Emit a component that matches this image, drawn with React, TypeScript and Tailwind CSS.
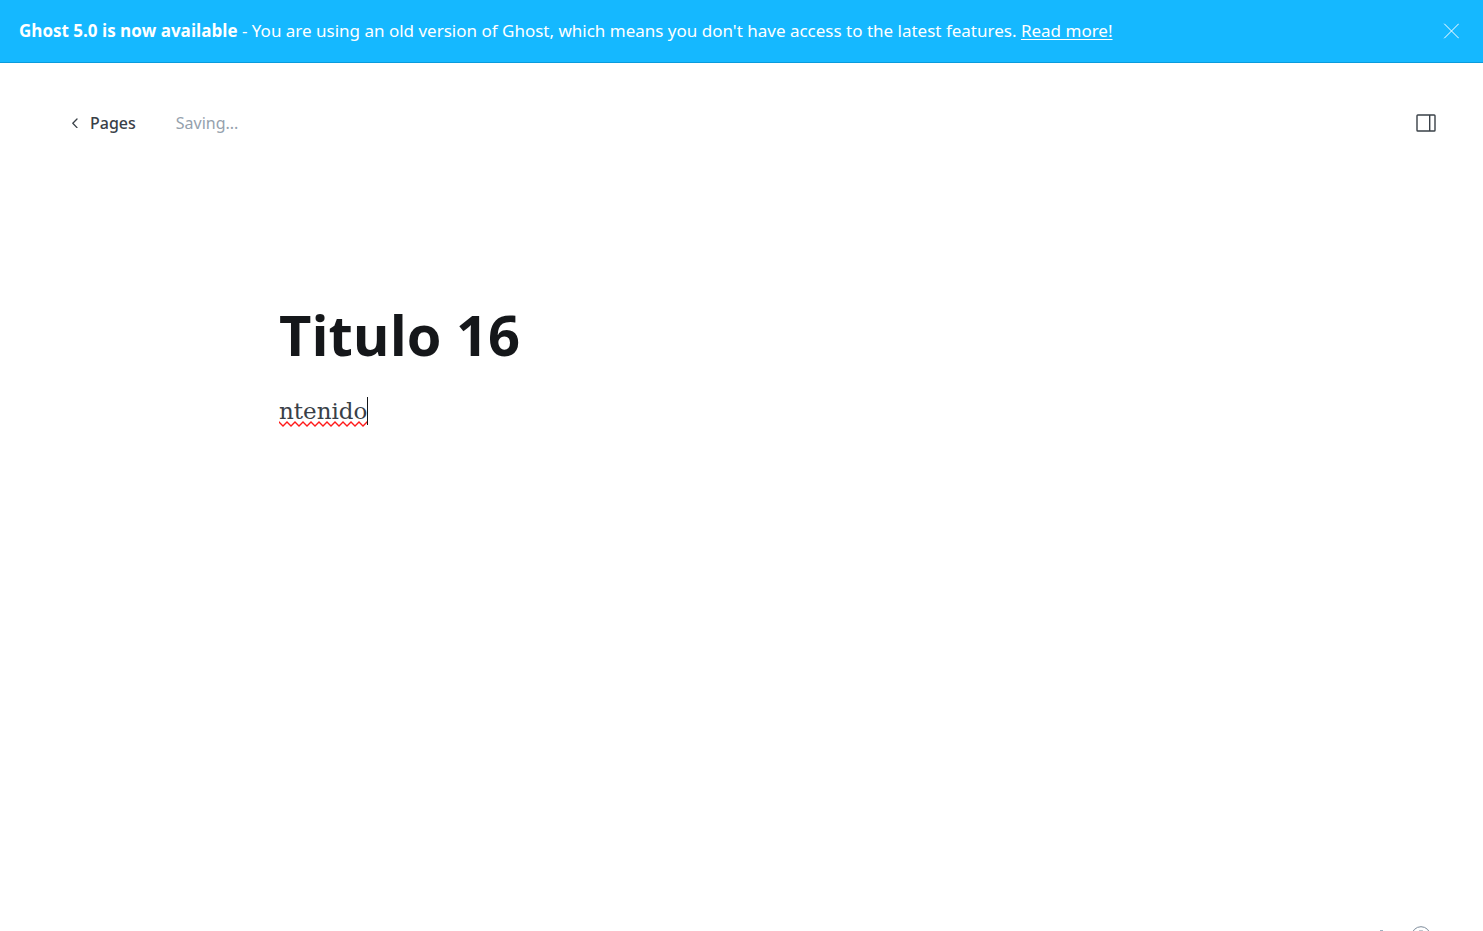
import { useState } from "react";

function Banner({ onClose }: { onClose: () => void }) {
  return (
    <aside className="flex h-[63px] shrink-0 items-center justify-between border-b border-[#0a9bdc] bg-[#15b8ff] pr-6 pl-[19px] text-[17px] leading-6 text-white">
      <p className="pb-px">
        <strong className="font-bold">Ghost 5.0 is now available</strong>
        <span className="font-['Noto_Sans',sans-serif]">
          {" "}
          - You are using an old version of Ghost, which means you don't have access to the latest
          features.{" "}
          <a href="#upgrade" className="underline underline-offset-2">
            Read more!
          </a>
        </span>
      </p>
      <button type="button" aria-label="Close" onClick={onClose} className="pb-px">
        <svg className="size-4" viewBox="0 0 16 16" fill="none" stroke="currentColor" strokeLinecap="round">
          <path d="M1.5 1l14 14M15.5 1L1.5 15" strokeWidth="1" />
        </svg>
      </button>
    </aside>
  );
}

function Toolbar() {
  return (
    <header className="flex shrink-0 items-center justify-between pt-12 pr-[47px] pl-[70px]">
      <div className="flex items-center gap-10 font-['Noto_Sans',sans-serif] text-base leading-6">
        <a href="#pages" className="flex items-center gap-[10px] font-medium text-[#394047]">
          <svg className="h-[10px] w-[10px]" viewBox="0 0 10 10" fill="none" stroke="currentColor" strokeWidth="1.3" strokeLinecap="round" strokeLinejoin="round">
            <path d="M7 1L2.8 5.3 7 9.6" />
          </svg>
          Pages
        </a>
        <span className="text-[#95a1ad]">Saving...</span>
      </div>
      <button type="button" aria-label="Settings" className="text-[#394047]">
        <svg className="h-[18px] w-5" viewBox="0 0 20 18" fill="none" stroke="currentColor" strokeWidth="1.4">
          <rect x="1" y="1" width="18" height="16" rx="0.8" />
          <path d="M13.7 1v16" />
        </svg>
      </button>
    </header>
  );
}

function SpellingMark() {
  return (
    <svg aria-hidden="true" className="absolute bottom-0 left-0 h-[6px] w-full" fill="none" stroke="#ff1a1a" strokeWidth="1.3">
      <defs>
        <pattern id="squiggle" width="8" height="6" patternUnits="userSpaceOnUse">
          <path d="M-2 3L0 1L4 5L8 1L10 3" />
        </pattern>
      </defs>
      <rect width="100%" height="6" fill="url(#squiggle)" stroke="none" />
    </svg>
  );
}

export default function App() {
  const [showBanner, setShowBanner] = useState(true);
  return (
    <div className="flex h-screen flex-col overflow-hidden bg-white font-['Open_Sans','Noto_Sans',sans-serif]">
      {showBanner && <Banner onClose={() => setShowBanner(false)} />}
      <Toolbar />
      <main className="mx-auto w-full max-w-[925px] flex-1 pt-40">
        <input
          aria-label="Page title"
          defaultValue="Titulo 16"
          className="block w-full text-[56px] leading-[78px] font-bold text-[#15171a] outline-none"
        />
        <div
          role="textbox"
          aria-label="Page content"
          tabIndex={0}
          className="mt-[22px] flex items-center font-['DejaVu_Serif',serif] text-[23px] leading-8 text-[#394047] outline-none"
        >
          <span className="relative">
            ntenido
            <SpellingMark />
          </span>
          <span className="h-7 w-px bg-[#15171a]" />
        </div>
      </main>
      <footer className="flex h-[5px] shrink-0 items-start justify-end gap-7 pr-[52px] text-[#7c8b9a]">
        <span className="h-px w-[3px] self-end bg-[#9fb0bf]" />
        <a href="#help" aria-label="Help" className="shrink-0">
          <svg className="size-5" viewBox="0 0 20 20" fill="none" stroke="currentColor">
            <circle cx="10" cy="10" r="9.3" />
            <path d="M7.5 8a2.6 2.6 0 0 1 5 0c0 1.8-2.5 2-2.5 4M10 14.3v.8M8.5 5h3" strokeLinecap="round" />
          </svg>
        </a>
      </footer>
    </div>
  );
}
